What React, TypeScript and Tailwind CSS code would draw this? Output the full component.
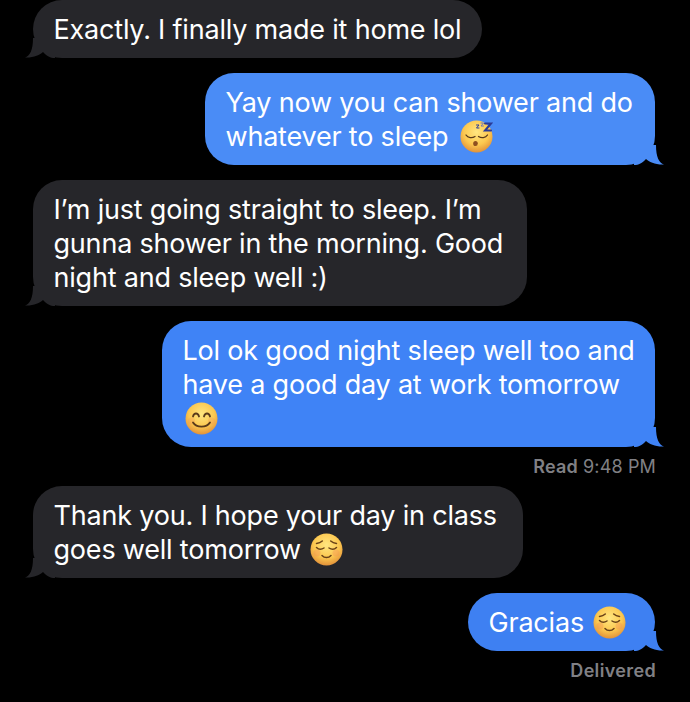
import type { ReactNode } from 'react';

const font = { fontFamily: 'Inter, "Liberation Sans", sans-serif' };

// 0 = sleeping, 1 = smiling, 2 = relaxed
const Emoji = ({ kind, gid }: { kind: number; gid: string }) => (
    <svg width="33" height="33" viewBox="0 0 33 33" className="inline-block align-[-7px]">
        <defs>
            <radialGradient id={gid} cx="50%" cy="36%" r="64%">
                <stop offset="0%" stopColor="#ffe680" />
                <stop offset="62%" stopColor="#fcc850" />
                <stop offset="100%" stopColor="#e2923a" />
            </radialGradient>
        </defs>
        <circle cx="16.5" cy="16.5" r="16" fill={`url(#${gid})`} />
        {kind === 0 && (
            <g fill="none" stroke="#5a3a1a" strokeWidth="1.300" strokeLinecap="round">
                <path d="M6 15c2 3 6 3.500 9 1.500" />
                <path d="M18.500 16.500c3 2 7 1.500 9-1.500" />
                <ellipse cx="15.500" cy="23.500" rx="2.300" ry="2.600" fill="#8f4f20" stroke="none" />
                <path d="M16.500 5h2.500l-2.500 3h2.500" stroke="#2a3a96" strokeWidth="1" />
                <path d="M21 3h2.500l-2.500 3h2.500" stroke="#6a78c0" strokeWidth="1" />
                <path d="M25 3.500h6l-6 7h6" stroke="#2a3a96" strokeWidth="2" />
            </g>
        )}
        {kind === 1 && (
            <g fill="none" stroke="#5a3a1a" strokeWidth="1.800" strokeLinecap="round">
                <circle cx="6.500" cy="19" r="3.500" fill="#f08a5a" opacity="0.25" stroke="none" />
                <circle cx="26.500" cy="19" r="3.500" fill="#f08a5a" opacity="0.25" stroke="none" />
                <path d="M8 14.500c1-4 5-4 6 0" />
                <path d="M19 14.500c1-4 5-4 6 0" />
                <path d="M8 20.500c3.500 5.500 13.500 5.500 17 0" />
            </g>
        )}
        {kind === 2 && (
            <g fill="none" stroke="#6a4218" strokeWidth="1.500" strokeLinecap="round">
                <circle cx="7" cy="20" r="3.500" fill="#f08a5a" opacity="0.35" stroke="none" />
                <circle cx="26" cy="20" r="3.500" fill="#f08a5a" opacity="0.35" stroke="none" />
                <path d="M6.500 14.500c2 2 5 2.200 7.500 .5" />
                <path d="M19 15c2.500 1.700 5.500 1.500 7.500-.5" />
                <path d="M6.500 10.500c2.200-.2 4.200-1 5.800-2.500" />
                <path d="M26.500 10.500c-2.200-.2-4.200-1-5.800-2.500" />
                <path d="M12 22.500c2.500 2.800 6.500 2.800 9 0" />
            </g>
        )}
    </svg>
);

const Tail = ({ color, side }: { color: string; side: string }) => (
    <svg width="34" height="24" viewBox="0 0 34 24" className={`absolute bottom-0 ${side}`}>
        <path d="M0 23.500C5 22 8 16 8 4L30 4L30 24C25 24 22 22 18 18C15 21 8 24 0 23.500Z" fill={color} />
    </svg>
);

const Received = ({ width, children }: { width: string; children: ReactNode }) => (
    <div className={`relative ml-[33px] whitespace-nowrap rounded-[29px] bg-[#26262a] pb-[11px] pl-[20.5px] pt-[13px] ${width}`}>
        <Tail color="#26262a" side="left-[-8px]" />
        <div className="relative">{children}</div>
    </div>
);

const Sent = ({ width, color, bg, children }: { width: string; color: string; bg: string; children: ReactNode }) => (
    <div className={`relative ml-auto mr-[35px] whitespace-nowrap rounded-[29px] pb-[11px] pl-[20.5px] pt-[13px] ${bg} ${width}`}>
        <Tail color={color} side="right-[-9px] -scale-x-100" />
        <div className="relative">{children}</div>
    </div>
);

export default function App() {
    return (
        <div className="flex h-[702px] w-[690px] flex-col overflow-hidden bg-black text-[27px] leading-[34px] tracking-[-0.2px] text-white" style={font}>
            <Received width="w-[449px]">Exactly. I finally made it home lol</Received>

            <div className="mt-[15px]">
                <Sent width="w-[450px]" color="#4a8cf6" bg="bg-[#4a8cf6]">
                    Yay now you can shower and do
                    <br />
                    whatever to sleep <span className="ml-[4px]"><Emoji kind={0} gid="e0" /></span>
                </Sent>
            </div>

            <div className="mt-[15px]">
                <Received width="w-[494px]">
                    I’m just going straight to sleep. I’m
                    <br />
                    gunna shower in the morning. Good
                    <br />
                    night and sleep well :)
                </Received>
            </div>

            <div className="mt-[15px]">
                <Sent width="w-[493px]" color="#3f83f6" bg="bg-[#3f83f6]">
                    Lol ok good night sleep well too and
                    <br />
                    have a good day at work tomorrow
                    <br />
                    <span className="ml-[2px]"><Emoji kind={1} gid="e1" /></span>
                </Sent>
            </div>

            <p className="mr-[34px] mt-[10px] text-right text-[18px] leading-[20px] tracking-[0.15px] text-[#808085]">
                <span className="font-semibold">Read</span> 9:48 PM
            </p>

            <div className="mt-[9px]">
                <Received width="w-[490px]">
                    Thank you. I hope your day in class
                    <br />
                    goes well tomorrow <span className="ml-[2px]"><Emoji kind={2} gid="e2" /></span>
                </Received>
            </div>

            <div className="mt-[15px]">
                <Sent width="w-[187px]" color="#3e80f2" bg="bg-[#3e80f2]">
                    Gracias <span className="ml-[2px]"><Emoji kind={2} gid="e3" /></span>
                </Sent>
            </div>

            <p className="mr-[34px] mt-[10px] text-right text-[18px] font-semibold leading-[20px] tracking-[0.35px] text-[#808085]">
                Delivered
            </p>
        </div>
    );
}
